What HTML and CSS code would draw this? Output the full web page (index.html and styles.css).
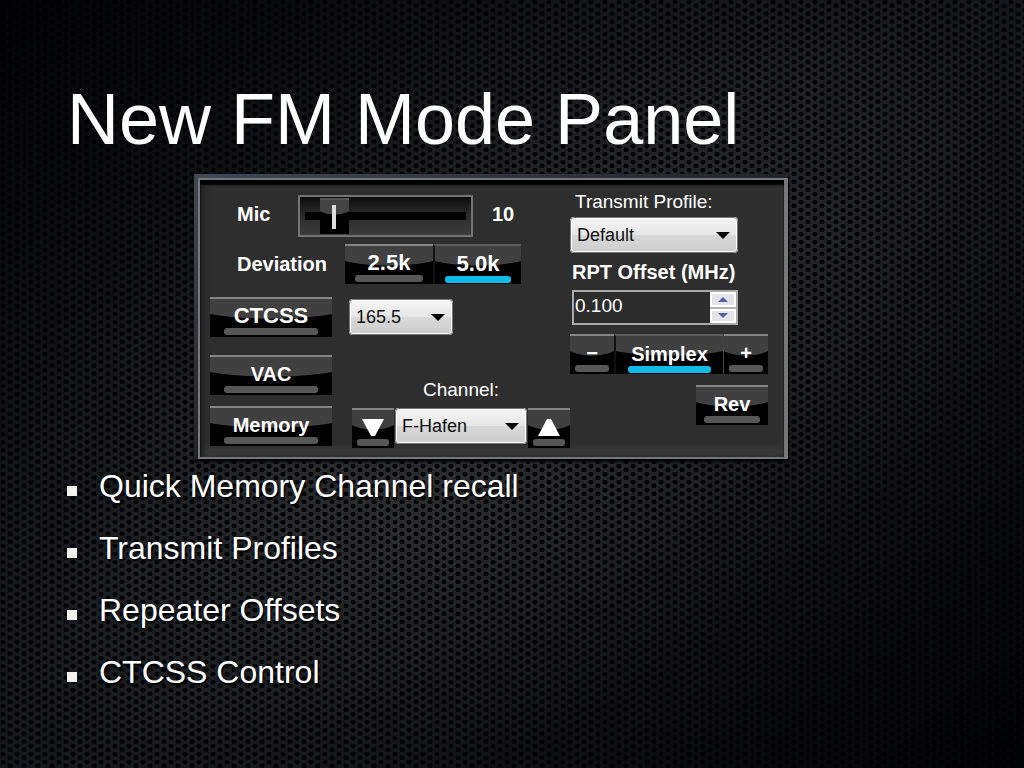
FILE: index.html
```html
<!DOCTYPE html>
<html lang="en">
<head>
    <meta charset="UTF-8">
    <meta name="viewport" content="width=device-width, initial-scale=1.0">
    <title>New FM Mode Panel</title>
    <link rel="stylesheet" href="styles.css">
</head>
<body>
    <main class="slide">
        <h1 class="title">New FM Mode Panel</h1>

        <div class="frame">
            <form class="panel">
                <div class="left">
                    <div class="row mic-row">
                        <label class="name" for="mic">Mic</label>
                        <input class="slider" type="range" id="mic" min="0" max="90" value="10">
                        <output class="mic-value" for="mic">10</output>
                    </div>

                    <div class="row deviation-row">
                        <span class="name">Deviation</span>
                        <button type="button" class="btn large">2.5k</button>
                        <button type="button" class="btn large on">5.0k</button>
                    </div>

                    <div class="row tone-row">
                        <button type="button" class="btn wide large">CTCSS</button>
                        <span class="select tone">
                            <select aria-label="CTCSS tone">
                                <option>165.5</option>
                            </select>
                        </span>
                    </div>

                    <div class="row memory-row">
                        <div class="stack">
                            <button type="button" class="btn wide">VAC</button>
                            <button type="button" class="btn wide">Memory</button>
                        </div>
                        <div class="channel">
                            <label for="channel">Channel:</label>
                            <div class="channel-controls">
                                <button type="button" class="btn small" aria-label="Previous channel">
                                    <svg class="arrow" viewBox="0 0 22 17"><path d="M0 0h22L13 17H9z"/></svg>
                                </button>
                                <span class="select">
                                    <select id="channel">
                                        <option>F-Hafen</option>
                                    </select>
                                </span>
                                <button type="button" class="btn small" aria-label="Next channel">
                                    <svg class="arrow" viewBox="0 0 22 17"><path d="M0 17h22L13 0H9z"/></svg>
                                </button>
                            </div>
                        </div>
                    </div>
                </div>

                <div class="right">
                    <label class="profile-label" for="profile">Transmit Profile:</label>
                    <span class="select profile">
                        <select id="profile">
                            <option>Default</option>
                        </select>
                    </span>

                    <label class="offset-label" for="offset">RPT Offset (MHz)</label>
                    <div class="spinner">
                        <input type="number" id="offset" min="0" step="0.1" value="0.100">
                        <div class="steps">
                            <button type="button" aria-label="Increase offset"><svg viewBox="0 0 10 5"><path d="M0 5h10L5 0z"/></svg></button>
                            <button type="button" aria-label="Decrease offset"><svg viewBox="0 0 10 5"><path d="M0 0h10L5 5z"/></svg></button>
                        </div>
                    </div>

                    <div class="shift">
                        <button type="button" class="btn small">−</button>
                        <button type="button" class="btn on">Simplex</button>
                        <button type="button" class="btn small">+</button>
                    </div>
                    <button type="button" class="btn rev">Rev</button>
                </div>
            </form>
        </div>

        <ul class="points">
            <li>Quick Memory Channel recall</li>
            <li>Transmit Profiles</li>
            <li>Repeater Offsets</li>
            <li>CTCSS Control</li>
        </ul>
    </main>
</body>
</html>
```

FILE: styles.css
```css
* {
    box-sizing: border-box;
}
body {
    margin: 0;
    min-height: 100vh;
    font-family: "Liberation Sans", Arial, sans-serif;
    color: #fff;
    background-color: #2c2e30;
    /* shading first, then the two offset rows of holes */
    background-image:
        linear-gradient(to bottom right, rgba(0,0,2,0.9) 0%, rgba(0,2,4,0.55) 22%, rgba(0,0,0,0.05) 45%, rgba(0,0,0,0.05) 55%, rgba(0,2,5,0.55) 75%, rgba(0,0,2,0.9) 100%),
        radial-gradient(ellipse 75% 85% at 50% 50%, rgba(0,5,10,0) 25%, rgba(0,5,10,0.65) 100%),
        radial-gradient(circle at 3px 2px, #040507 2px, rgba(4,5,7,0) 3px),
        radial-gradient(circle at 10px 6px, #040507 2px, rgba(4,5,7,0) 3px);
    background-size: 100% 100%, 100% 100%, 14px 8px, 14px 8px;
}
.slide {
    padding: 75px 67px 40px;
}
.title {
    margin: 0 0 11px;
    font-size: 72px;
    line-height: 88px;
    font-weight: normal;
}

/* Panel */
.frame {
    max-width: 594px;
    margin-left: 127px;
    padding: 4px 0 0 4px;
    background: linear-gradient(to bottom right, #414956, #20242a 50%, #101215);
    box-shadow: 1px 3px 2px #050607;
}
.panel {
    display: flex;
    justify-content: space-between;
    padding: 15px 16px 11px 10px;
    border: 2px solid #777;
    border-right-width: 4px;
    background-color: #2e2e2e;
    box-shadow: inset 0 5px 2px #000, inset 3px 0 5px #1c1c1c, inset 0 -8px 8px #3c3c3c;
    font-size: 19px;
    line-height: 24px;
}
.left {
    flex: 0 1 360px;
}
.right {
    flex: 0 1 198px;
    display: flex;
    flex-direction: column;
}
.row {
    display: flex;
}
.name {
    flex: 0 0 108px;
    font-size: 20px;
    font-weight: bold;
}
.mic-row,
.deviation-row {
    align-items: center;
    padding-left: 27px;
}
.mic-row .name {
    flex-basis: 61px;
}
.mic-row .name,
.mic-value {
    padding-bottom: 4px;
}
.slider {
    appearance: none;
    -webkit-appearance: none;
    width: 175px;
    height: 42px;
    margin: 0;
    padding: 0 5px;
    border: 2px solid #747474;
    background: linear-gradient(#0c0c0c, #2a2a2a 45%, #3c3c3c);
}
.slider::-webkit-slider-runnable-track {
    height: 8px;
    background: #000;
}
.slider::-webkit-slider-thumb {
    -webkit-appearance: none;
    width: 29px;
    height: 36px;
    margin-top: -14px;
    border-top: 2px solid #555;
    background:
        linear-gradient(#ddd, #ddd) 50% 5px / 4px 24px no-repeat,
        radial-gradient(ellipse 80% 15px at 50% 0, #444 95%, rgba(0,0,0,0) 100%),
        #000;
}
.mic-value {
    margin-left: 19px;
    font-size: 20px;
    font-weight: bold;
}
.deviation-row {
    margin-top: 7px;
}
.deviation-row .btn {
    flex: 0 1 88px;
}
.tone-row {
    align-items: center;
    margin-top: 13px;
}
.memory-row {
    justify-content: space-between;
    align-items: flex-end;
    margin-top: 18px;
}
.stack {
    display: flex;
    flex-direction: column;
    gap: 11px;
}

/* Buttons with an indicator bar under the text */
.btn {
    display: flex;
    flex-direction: column;
    align-items: center;
    height: 40px;
    padding: 5px 0 2px;
    border: 0;
    border-top: 2px solid #858585;
    background: radial-gradient(ellipse 80% 20px at 50% 0, #404040 96%, #000 100%);
    color: #fff;
    font-family: inherit;
    font-size: 20px;
    font-weight: bold;
    line-height: 24px;
    cursor: pointer;
}
.btn::after {
    content: "";
    width: 77%;
    height: 7px;
    border-radius: 3px;
    background: #575757;
}
.btn.on {
    padding: 6px 0 1px;
    border-top-color: #5c5c5c;
    border-left: 2px solid #111;
}
.btn.on::after {
    background: #10bbea;
}
.btn.large {
    font-size: 22px;
}
.btn.wide {
    width: 122px;
}
.btn.small {
    flex: 0 0 44px;
}
.arrow {
    width: 22px;
    height: 17px;
    margin: 4px 0 3px;
    fill: #fff;
}

/* Drop-downs */
.select {
    position: relative;
    display: block;
}
.select select {
    appearance: none;
    -webkit-appearance: none;
    display: block;
    width: 100%;
    height: 36px;
    padding: 0 5px;
    border: 2px solid #fff;
    border-radius: 4px;
    outline: 1px solid #777;
    outline-offset: -1px;
    background: linear-gradient(#f4f4f4, #e6e6e6 50%, #d8d8d8 51%, #cecece);
    color: #111;
    font-family: inherit;
    font-size: 18px;
}
.select::after {
    content: "";
    position: absolute;
    top: 15px;
    right: 8px;
    border: 7px solid transparent;
    border-top-color: #000;
    border-bottom: 0;
    pointer-events: none;
}
.tone {
    width: 104px;
    margin-left: 17px;
}
.channel {
    flex: 0 1 218px;
    margin-bottom: -2px;
}
.channel label {
    display: block;
    margin-bottom: 6px;
    text-align: center;
}
.channel-controls {
    display: flex;
    gap: 1px;
}
.channel-controls .select {
    flex: 1;
}
.channel-controls .btn.small {
    flex-basis: 42px;
}

/* Right column */
.profile-label {
    margin: -5px 0 3px 5px;
}
.profile {
    width: 168px;
}
.offset-label {
    margin: 7px 0 6px 2px;
    font-size: 20px;
    font-weight: bold;
    white-space: nowrap;
}
.spinner {
    display: flex;
    width: 166px;
    height: 35px;
    margin-left: 2px;
    border: 2px solid #aaa;
}
.spinner input {
    appearance: textfield;
    -moz-appearance: textfield;
    flex: 1;
    min-width: 0;
    padding: 0 1px 4px;
    border: 0;
    background: #2c2c2c;
    color: #fff;
    font-family: inherit;
    font-size: 19px;
}
.spinner input::-webkit-inner-spin-button {
    -webkit-appearance: none;
    margin: 0;
}
.steps {
    display: flex;
    flex-direction: column;
    gap: 2px;
    width: 26px;
    background: #b4b4b4;
}
.steps button {
    flex: 1;
    display: flex;
    align-items: center;
    justify-content: center;
    min-height: 0;
    padding: 0;
    border: 2px solid #fff;
    background: #e4e4e8;
}
.steps svg {
    width: 10px;
    height: 5px;
    fill: #5261a0;
}
.shift {
    display: flex;
    margin-top: 9px;
}
.shift .btn.on {
    flex: 1;
    border-right: 1px solid #444;
}
.rev {
    align-self: flex-end;
    width: 72px;
    margin-top: 11px;
}

/* Bullet list */
.points {
    display: flex;
    flex-direction: column;
    gap: 26px;
    margin: 9px 0 0;
    padding: 0;
    list-style: none;
    font-size: 32px;
    line-height: 36px;
    text-shadow: 1px 2px 2px #000;
}
.points li {
    display: flex;
    align-items: center;
    gap: 22px;
}
.points li::before {
    content: "";
    width: 10px;
    height: 10px;
    margin-top: 10px;
    background: #f2f2f2;
}
```
